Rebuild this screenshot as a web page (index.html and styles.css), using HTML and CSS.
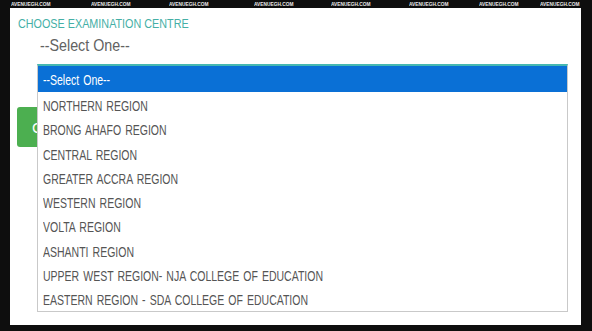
FILE: index.html
```html
<!DOCTYPE html>
<html>
<head>
<meta charset="utf-8">
<link rel="stylesheet" href="styles.css">
</head>
<body>
<div class="wm">
  <span><b>AVENUEGH.COM</b></span><span><b>AVENUEGH.COM</b></span><span><b>AVENUEGH.COM</b></span><span><b>AVENUEGH.COM</b></span>
  <span><b>AVENUEGH.COM</b></span><span><b>AVENUEGH.COM</b></span><span><b>AVENUEGH.COM</b></span><span><b>AVENUEGH.COM</b></span>
</div>
<div class="panel">
  <div class="label"><span class="sq">CHOOSE EXAMINATION CENTRE</span></div>
  <div class="value"><span class="sq">--Select One--</span></div>
  <button class="btn"><span class="sq">CONTINUE</span></button>
  <ul class="dropdown">
    <li class="sel"><span class="sq">--Select One--</span></li>
    <li><span class="sq">NORTHERN REGION</span></li>
    <li><span class="sq">BRONG AHAFO REGION</span></li>
    <li><span class="sq">CENTRAL REGION</span></li>
    <li><span class="sq">GREATER ACCRA REGION</span></li>
    <li><span class="sq">WESTERN REGION</span></li>
    <li><span class="sq">VOLTA REGION</span></li>
    <li><span class="sq">ASHANTI REGION</span></li>
    <li><span class="sq">UPPER WEST REGION- NJA COLLEGE OF EDUCATION</span></li>
    <li><span class="sq">EASTERN REGION - SDA COLLEGE OF EDUCATION</span></li>
  </ul>
</div>
</body>
</html>
```
FILE: styles.css
```css
html, body {
  margin: 0;
  padding: 0;
  background: #0e0e0e;
  width: 592px;
  height: 331px;
  overflow: hidden;
}
.sq {
  display: inline-block;
  white-space: nowrap;
  transform-origin: left center;
}
.wm {
  height: 8px;
  display: flex;
  align-items: center;
  font-family: "Liberation Sans", sans-serif;
  font-weight: bold;
  font-size: 6px;
  line-height: 8px;
  color: #e8e8e8;
  white-space: nowrap;
}
.wm span { width: 40px; }
.wm b {
  display: inline-block;
  transform: scaleX(0.8);
  transform-origin: left center;
}
.wm span:nth-child(1) { margin-left: 11px; }
.wm span:nth-child(2) { margin-left: 40px; }
.wm span:nth-child(3) { margin-left: 38px; }
.wm span:nth-child(4) { margin-left: 45px; }
.wm span:nth-child(5) { margin-left: 37px; }
.wm span:nth-child(6) { margin-left: 38px; }
.wm span:nth-child(7) { margin-left: 30px; }
.wm span:nth-child(8) { margin-left: 21px; }
.panel {
  position: relative;
  margin-left: 10px;
  width: 571px;
  height: 317px;
  background: #fff;
  padding-top: 8px;
  box-sizing: border-box;
}
.label {
  margin-left: 8px;
  font-family: "Liberation Sans", sans-serif;
  font-size: 13px;
  line-height: 16px;
  color: #45afa6;
}
.label .sq { transform: scaleX(0.83); }
.value {
  margin-left: 30px;
  margin-top: 4px;
  font-family: "Liberation Sans", sans-serif;
  font-size: 17px;
  line-height: 20px;
  color: #626262;
}
.value .sq { transform: scaleX(0.84); }
.btn {
  display: block;
  margin: 51px 0 0 7px;
  width: 110px;
  height: 40px;
  border: none;
  border-radius: 3px;
  background: #4caf50;
  color: #fff;
  font-family: "Liberation Sans", sans-serif;
  font-size: 15px;
  text-align: left;
  padding-left: 15px;
}
.dropdown {
  position: absolute;
  left: 27px;
  top: 56px;
  width: 531px;
  margin: 0;
  padding: 0;
  list-style: none;
  background: #fff;
  border: 1px solid #c9c9c9;
  border-top: 2px solid #45b8b2;
  box-sizing: border-box;
  height: 248px;
  font-family: "Liberation Sans", sans-serif;
  font-size: 14px;
  color: #555;
}
.dropdown li {
  height: 24.3px;
  line-height: 28px;
  padding-left: 5px;
}
.dropdown .sq {
  transform: scaleX(0.75);
  word-spacing: 1.5px;
}
.dropdown li.sel {
  height: 26px;
  line-height: 29px;
  background: #0a70d6;
  color: #fff;
}
```
